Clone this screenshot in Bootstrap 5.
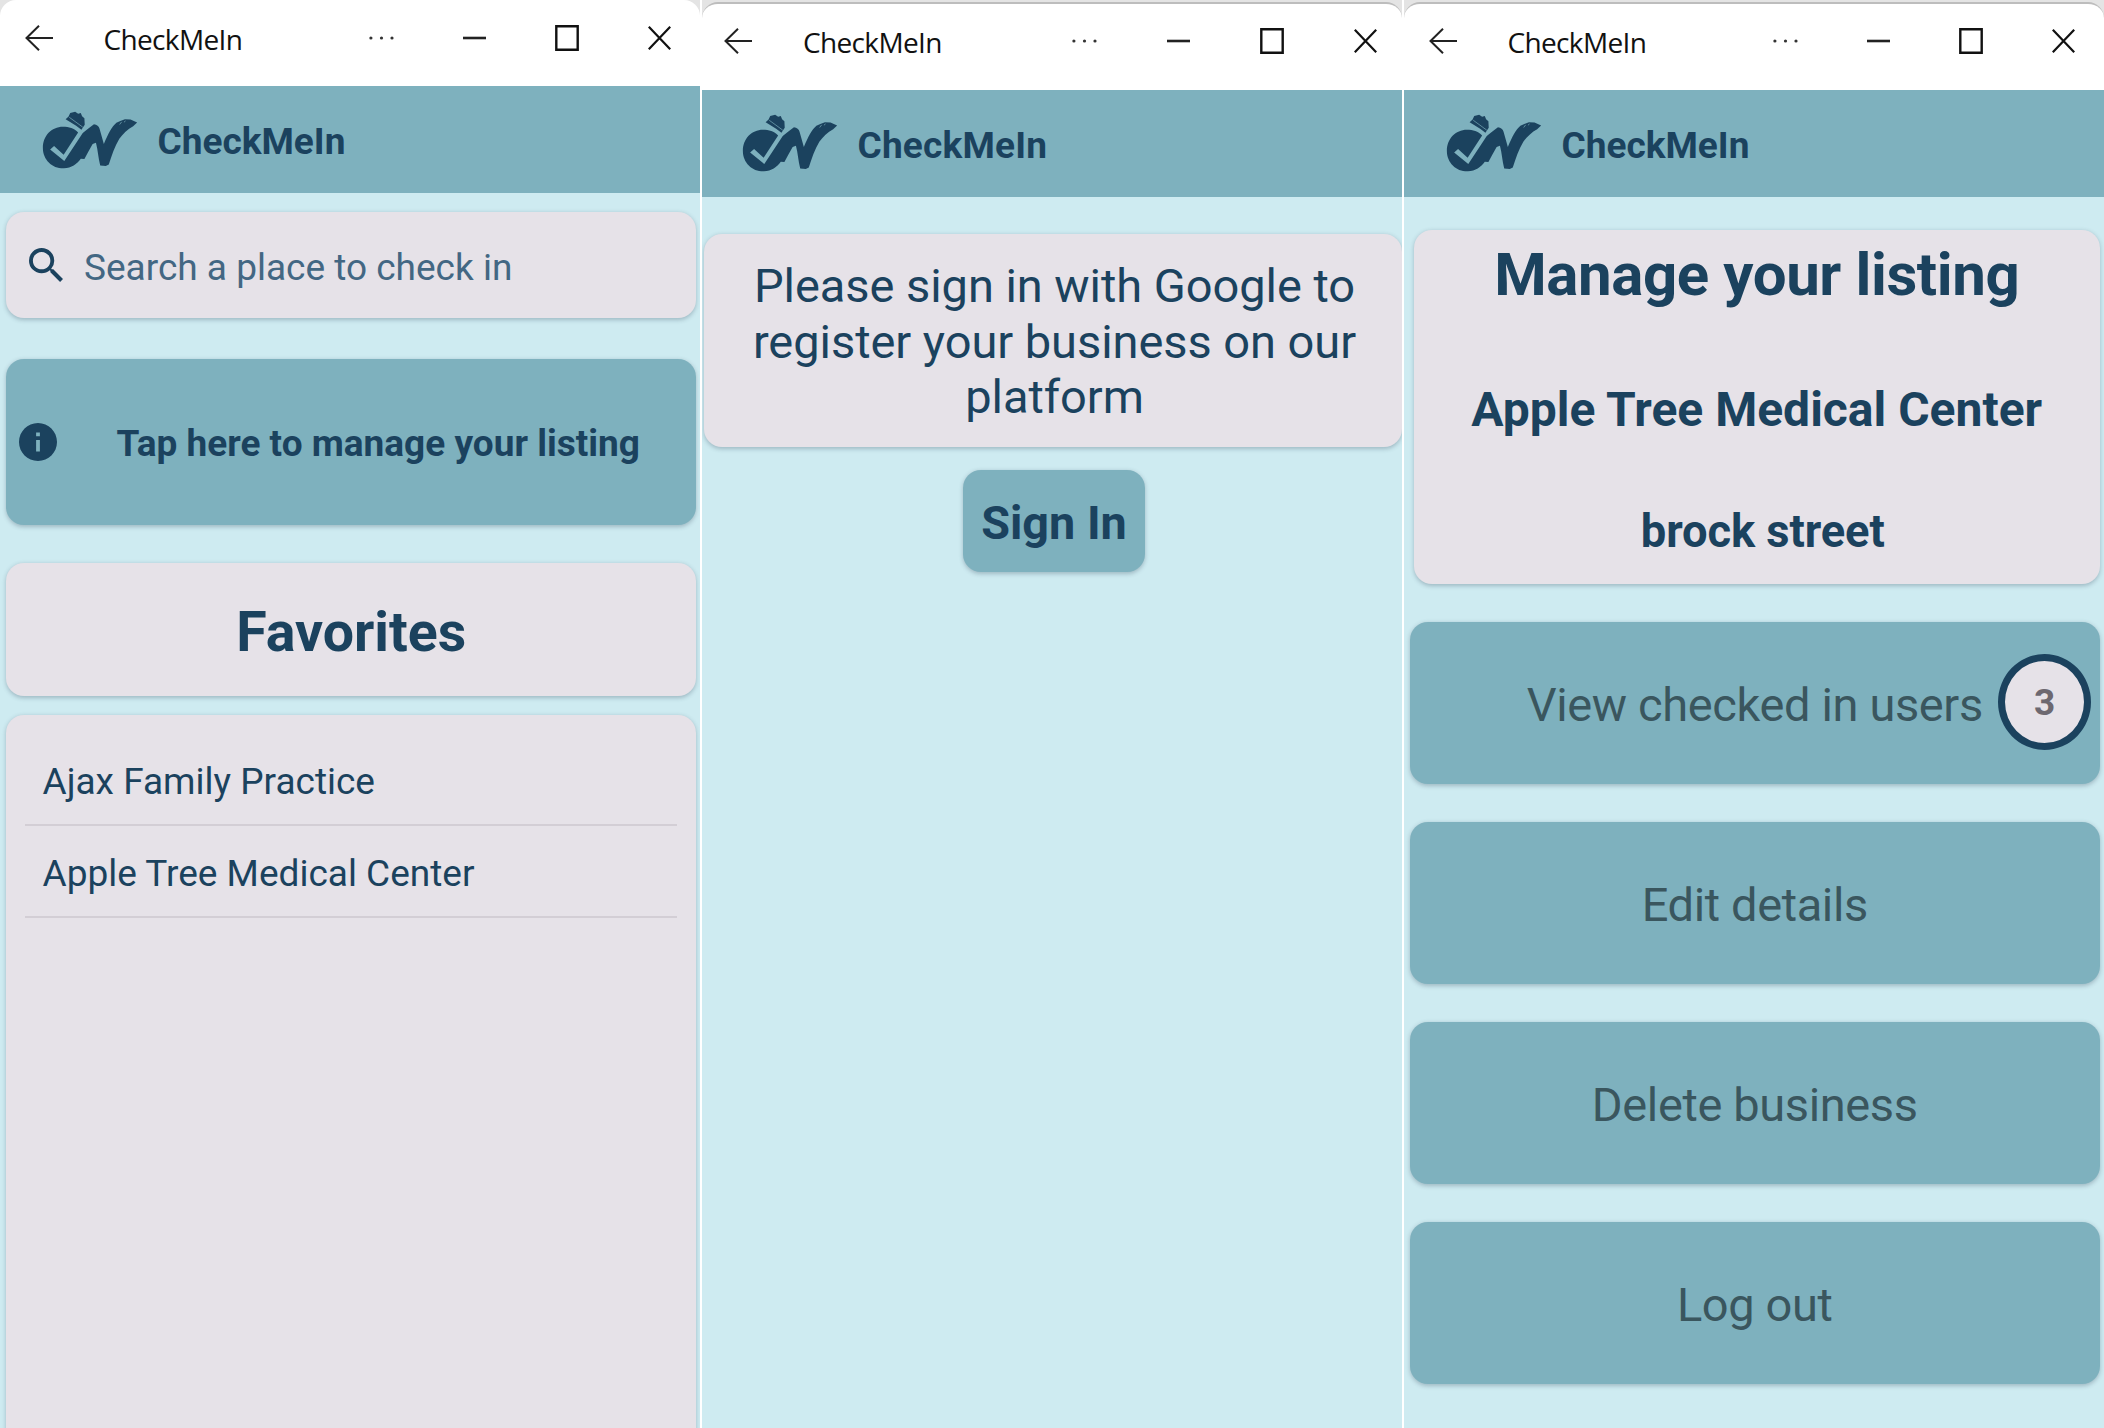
<!DOCTYPE html>
<html lang="en">
<head>
<meta charset="utf-8">
<meta name="viewport" content="width=device-width, initial-scale=1">
<title>CheckMeIn</title>
<link rel="stylesheet" href="https://cdn.jsdelivr.net/npm/bootstrap@5.3.0/dist/css/bootstrap.min.css">
<style>
:root{--ink:#1b425e;--teal:#7eb1be;--mist:#ceebf1;--lilac:#e6e2e8}
body{font-family:Roboto,"Liberation Sans",sans-serif;color:var(--ink);background:#fff;overflow:hidden}
.screens{width:2104px;height:1428px;gap:2px}
.pane{flex:1 1 0;min-width:0;background:var(--mist);overflow:hidden}
svg{display:block;flex:none}

/* window title bar */
.chrome-wrap{background:#e4e4e4;flex:none}
.chrome{height:86px;background:#fff;border-radius:16px 16px 0 0;padding:0 0 11px 25px;color:#111}
.lower .chrome-wrap{padding-top:2px}
.lower .chrome{height:87.5px;border-top:2px solid #bdbdbd}
.win-title{font:400 28px/38px "Open Sans","Noto Sans",sans-serif;letter-spacing:-.65px;white-space:nowrap;width:265px;margin:2px 0 0 50.5px}
.gap-ctl{margin-left:69px}
.middle .chrome{padding-left:22px}
.middle .win-title{width:269px;margin-left:51px}
.middle .gap-ctl{margin-left:70px}

/* app bar */
.appbar{height:107px;background:var(--teal);padding-left:42px;flex:none}
.middle .appbar{padding-left:40px}
.brand{font-size:37px;font-weight:700;line-height:44px;padding-top:5px;margin-left:19.5px}
.middle .brand{letter-spacing:.2px}

/* tiles */
.tile{--bs-card-border-width:0;--bs-card-border-radius:18px;background:var(--lilac);border:0;border-radius:18px;box-shadow:0 1.5px 4px rgba(60,80,100,.32);color:var(--ink)}
.tile-teal{background:var(--teal)}
.txt{font-size:37px;line-height:44px;white-space:nowrap}
.home-body{margin:0 4px 0 5.5px}
.search-tile{height:106px;margin-top:19px;padding-left:23.5px}
.search-tile .txt{color:#436783;padding-top:5px;margin-left:21px}
.tap-tile{height:166.5px;margin-top:40.5px;padding-left:13px}
.tap-tile .txt{padding-top:5px;margin-left:60px}
.fav-tile{height:133.5px;margin-top:37.5px;font-size:55.5px;padding:7px 0 0 1px}
.list-tile{height:760px;margin-top:19px;padding:19px 19px 0}
.fav-row{height:92px;padding:5px 0 0 18px;border-bottom:2.5px solid #d3ced5}

.notice{height:213px;margin:37.5px 0 0 2px;padding-top:24px;font-size:47px;line-height:55.6px;padding-left:3px;letter-spacing:-.05px}
.signin{width:182px;height:101.5px;margin:23px 0 0 4px;font-size:46.8px;padding:4px 0 0}

.listing{height:354px;margin:33px 4px 0 9.5px;white-space:nowrap}
.listing h1{font-size:60px;line-height:70px;letter-spacing:-.4px;font-weight:700;margin:10px 0 0}
.listing h2{font-size:48px;line-height:56px;font-weight:700;margin:72px 0 0}
.listing h3{font-size:45.3px;line-height:52px;font-weight:700;margin:68px 0 0;padding-left:12px;letter-spacing:-.1px}
.actions{gap:38px;margin:38px 4px 0 5.5px}
.action{height:162px;font-size:47px;letter-spacing:-.38px;color:#3a565e;padding:5px 0 0;white-space:nowrap;flex:none}
.action:hover{background:var(--teal)}
.counter{right:9px;top:32.500px;width:93px;height:96px;border:7px solid var(--ink);border-radius:50%;background:var(--lilac);color:#6d6870;font-size:37px;line-height:82px;font-weight:700;padding-top:1px;letter-spacing:0}
</style>
</head>
<body>
<svg width="0" height="0" class="position-absolute" aria-hidden="true">
  <symbol id="i-back" viewBox="0 0 28 26"><path d="M14 .8 1.5 13 14 25.2M1.5 13H28" fill="none" stroke="#222" stroke-width="2"/></symbol>
  <symbol id="i-dots" viewBox="0 0 25 4"><g fill="#333"><circle cx="1.9" cy="2" r="1.6"/><circle cx="12.5" cy="2" r="1.6"/><circle cx="23" cy="2" r="1.6"/></g></symbol>
  <symbol id="i-min" viewBox="0 0 23 4"><path d="M0 2h23" stroke="#222" stroke-width="2.6"/></symbol>
  <symbol id="i-max" viewBox="0 0 24 26"><path d="M1.3 1.3h21.4v23.4H1.3z" fill="none" stroke="#111" stroke-width="2.4"/></symbol>
  <symbol id="i-close" viewBox="0 0 23 24"><path d="M.8.8 22.2 23.2M22.2.8.8 23.2" stroke="#111" stroke-width="2.2"/></symbol>
  <symbol id="i-logo" viewBox="38 46 288 176">
    <path fill="#1b425e" d="M100 94c18 0 34 5 46 17L102 179 73 152 61 163 104 198 160 113 176 100 194 86C203 87 209 92 211 100L224 146C237 116 248 94 262 82L274 76 288 71 305 72 325 81 313 92C296 101 282 115 271 130 257 153 248 181 239 208L230 213 213 211C207 189 206 163 200 142L190 146 176 171 165 192 154 191C142 207 126 219 103 220 68 221 39 194 39 158 39 122 65 94 100 94Z"/>
    <path fill="#1b425e" d="M108 71 117 63 122 52 137 48 146 54 154 52 158 62 165 68 166 88 156 103 140 91Z"/>
    <path fill="none" stroke="#7eb1be" stroke-width="2" d="M119 65 160 95M272 87 278 79M285 80 290 76"/>
  </symbol>
</svg>
<main class="screens d-flex">

  <section class="pane d-flex flex-column">
    <div class="chrome-wrap"><div class="chrome d-flex align-items-center">
      <svg width="28" height="26"><use href="#i-back"/></svg><div class="win-title">CheckMeIn</div>
      <svg width="25" height="4"><use href="#i-dots"/></svg><svg class="gap-ctl" width="23" height="4"><use href="#i-min"/></svg>
      <svg class="gap-ctl" width="24" height="26"><use href="#i-max"/></svg><svg class="gap-ctl" width="23" height="24"><use href="#i-close"/></svg>
    </div></div>
    <header class="appbar d-flex align-items-center"><svg width="96" height="58"><use href="#i-logo"/></svg><div class="brand">CheckMeIn</div></header>
    <div class="home-body d-flex flex-column">
      <div class="card tile search-tile flex-row align-items-center">
        <svg width="34" height="34" viewBox="3 3 17.5 17.5"><path fill="#1b425e" d="M15.5 14h-.79l-.28-.27A6.47 6.47 0 0 0 16 9.500 6.500 6.500 0 1 0 9.500 16c1.610 0 3.090-.59 4.230-1.570l.27.28v.79l5 4.990L20.490 19l-4.990-5zm-6 0C7.010 14 5 11.990 5 9.500S7.010 5 9.500 5 14 7.010 14 9.500 11.990 14 9.500 14z"/></svg>
        <div class="txt">Search a place to check in</div>
      </div>
      <div class="card tile tile-teal tap-tile flex-row align-items-center">
        <svg width="38" height="38" viewBox="2 2 20 20"><path fill="#1b425e" d="M12 2C6.480 2 2 6.480 2 12s4.480 10 10 10 10-4.480 10-10S17.520 2 12 2zm1 15h-2v-6h2v6zm0-8h-2V7h2v2z"/></svg>
        <div class="txt fw-bold">Tap here to manage your listing</div>
      </div>
      <div class="card tile fav-tile fw-bold align-items-center justify-content-center">Favorites</div>
      <div class="card tile list-tile">
        <div class="fav-row txt d-flex align-items-center">Ajax Family Practice</div>
        <div class="fav-row txt d-flex align-items-center">Apple Tree Medical Center</div>
      </div>
    </div>
  </section>

  <section class="pane lower middle d-flex flex-column">
    <div class="chrome-wrap"><div class="chrome d-flex align-items-center">
      <svg width="28" height="26"><use href="#i-back"/></svg><div class="win-title">CheckMeIn</div>
      <svg width="25" height="4"><use href="#i-dots"/></svg><svg class="gap-ctl" width="23" height="4"><use href="#i-min"/></svg>
      <svg class="gap-ctl" width="24" height="26"><use href="#i-max"/></svg><svg class="gap-ctl" width="23" height="24"><use href="#i-close"/></svg>
    </div></div>
    <header class="appbar d-flex align-items-center"><svg width="96" height="58"><use href="#i-logo"/></svg><div class="brand">CheckMeIn</div></header>
    <div class="card tile notice d-block text-center">Please sign in with Google to<br>register your business on our<br>platform</div>
    <button class="btn tile tile-teal signin fw-bold align-self-center">Sign In</button>
  </section>

  <section class="pane lower d-flex flex-column">
    <div class="chrome-wrap"><div class="chrome d-flex align-items-center">
      <svg width="28" height="26"><use href="#i-back"/></svg><div class="win-title">CheckMeIn</div>
      <svg width="25" height="4"><use href="#i-dots"/></svg><svg class="gap-ctl" width="23" height="4"><use href="#i-min"/></svg>
      <svg class="gap-ctl" width="24" height="26"><use href="#i-max"/></svg><svg class="gap-ctl" width="23" height="24"><use href="#i-close"/></svg>
    </div></div>
    <header class="appbar d-flex align-items-center"><svg width="96" height="58"><use href="#i-logo"/></svg><div class="brand">CheckMeIn</div></header>
    <div class="card tile listing text-center">
      <h1>Manage your listing</h1>
      <h2>Apple Tree Medical Center</h2>
      <h3>brock street</h3>
    </div>
    <div class="actions d-flex flex-column">
      <button class="btn tile tile-teal action position-relative">View checked in users<span class="counter position-absolute">3</span></button>
      <button class="btn tile tile-teal action">Edit details</button>
      <button class="btn tile tile-teal action">Delete business</button>
      <button class="btn tile tile-teal action">Log out</button>
    </div>
  </section>
</main>
<script src="https://cdn.jsdelivr.net/npm/bootstrap@5.3.0/dist/js/bootstrap.bundle.min.js"></script>
</body>
</html>
